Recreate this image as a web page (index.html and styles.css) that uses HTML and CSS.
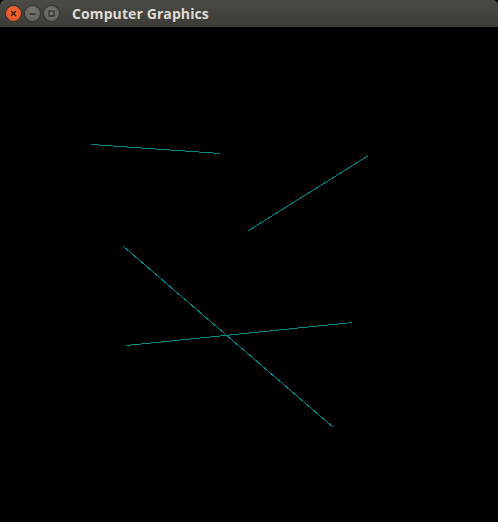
FILE: index.html
```html
<!DOCTYPE html>
<html>
<head>
<meta charset="utf-8">
<link rel="stylesheet" href="styles.css">
</head>
<body>
<div class="window">
  <div class="titlebar">
    <div class="buttons">
      <span class="btn close"><svg width="15" height="15" viewBox="0 0 15 15"><path d="M5 5L10 10M10 5L5 10" stroke="#3a1a0c" stroke-width="1.4" fill="none"/></svg></span>
      <span class="btn"><svg width="15" height="15" viewBox="0 0 15 15"><path d="M4.5 8H10.5" stroke="#2e2d2a" stroke-width="1.4" fill="none"/></svg></span>
      <span class="btn"><svg width="15" height="15" viewBox="0 0 15 15"><rect x="5" y="5" width="5" height="5" stroke="#2e2d2a" stroke-width="1.2" fill="none"/></svg></span>
    </div>
    <span class="title">Computer Graphics</span>
  </div>
  <svg class="canvas" width="498" height="495" viewBox="0 27 498 495">
    <g stroke="#008b8b" stroke-width="1" shape-rendering="crispEdges">
      <line x1="91.5" y1="144.5" x2="220.5" y2="153.5"/>
      <line x1="248.5" y1="230.5" x2="368.5" y2="155.5"/>
      <line x1="123.5" y1="246.5" x2="333.5" y2="427.5"/>
      <line x1="126.5" y1="345.5" x2="352.5" y2="322.5"/>
    </g>
  </svg>
</div>
</body>
</html>
```
FILE: styles.css
```css
html, body { margin: 0; padding: 0; background: #000; }
.window { width: 498px; height: 522px; display: flex; flex-direction: column; background: #000; overflow: hidden; }
.titlebar {
  height: 27px; flex: none; display: flex; align-items: center;
  background: linear-gradient(#4b4a45, #3c3b37);
  border-radius: 5px 5px 0 0;
  box-sizing: border-box; padding-left: 6px;
}
.buttons { display: flex; gap: 4px; }
.btn {
  width: 15px; height: 15px; border-radius: 50%;
  background: radial-gradient(circle at 50% 40%, #76756f, #5d5c57);
  display: flex; align-items: center; justify-content: center;
  box-shadow: 0 0 0 1px #34332f;
}
.btn.close { background: radial-gradient(circle at 50% 40%, #f26a3a, #e0501c); }
.title {
  margin-left: 13px; color: #dfdbd2; font-family: "Open Sans", "DejaVu Sans", sans-serif;
  font-weight: bold; font-size: 14px; letter-spacing: 0.1px;
}
.canvas { display: block; flex: none; }
```
